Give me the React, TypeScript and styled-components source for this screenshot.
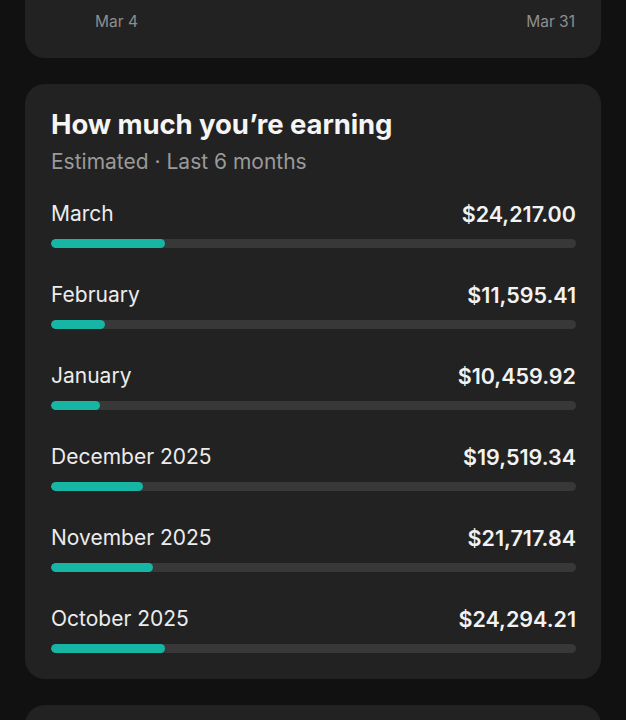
import React from "react";
import styled, { createGlobalStyle } from "styled-components";

const Global = createGlobalStyle`
  html, body { margin: 0; padding: 0; background: #111111; }
  body { font-family: Inter, "Noto Sans", "Liberation Sans", sans-serif; -webkit-font-smoothing: antialiased; }
  #root { overflow: hidden; height: 720px; }
`;

const Page = styled.div`
  display: flex;
  flex-direction: column;
  gap: 26px;
  padding: 0 25px;
  margin-top: -28px;
`;

const Card = styled.section`
  background: #222222;
  border-radius: 20px;
  padding: 24px 25px 26px 26px;
  display: flex;
  flex-direction: column;
`;

const AxisRow = styled.div`
  display: flex;
  justify-content: space-between;
  padding: 16px 1px 0 44px;
  font-size: 15.5px;
  line-height: 20px;
  color: #8e8e8e;
`;

const Title = styled.h2`
  margin: 0;
  font-size: 27.5px;
  line-height: 32px;
  font-weight: 700;
  color: #f5f5f5;
  letter-spacing: -0.1px;
`;

const Subtitle = styled.div`
  margin-top: 8px;
  font-size: 21px;
  line-height: 28px;
  color: #9a9a9a;
`;

const List = styled.div`
  margin-top: 24px;
  display: flex;
  flex-direction: column;
  gap: 33px;
`;

const Row = styled.div`
  display: flex;
  flex-direction: column;
  gap: 11px;
`;

const RowHead = styled.div`
  display: flex;
  justify-content: space-between;
  align-items: center;
  font-size: 21px;
  line-height: 28px;
  color: #ececec;
`;

const Amount = styled.span`
  font-weight: 600;
  font-size: 21.5px;
  color: #f2f2f2;
`;

const Track = styled.div`
  height: 9px;
  border-radius: 5px;
  background: #383838;
  overflow: hidden;
`;

const Fill = styled.div`
  height: 100%;
  border-radius: 5px;
  background: #17b5a3;
`;

const EmptyCard = styled(Card)`
  min-height: 200px;
`;

const months: [string, number][] = [
  ["March", 24217.0],
  ["February", 11595.41],
  ["January", 10459.92],
  ["December 2025", 19519.34],
  ["November 2025", 21717.84],
  ["October 2025", 24294.21],
];

const total = months.reduce((s, [, v]) => s + v, 0);
const fmt = (v: number) =>
  "$" + v.toLocaleString("en-US", { minimumFractionDigits: 2, maximumFractionDigits: 2 });

export default function App() {
  return (
    <>
      <Global />
      <Page>
        <Card>
          <AxisRow>
            <span>Mar 4</span>
            <span>Mar 31</span>
          </AxisRow>
        </Card>
        <Card>
          <Title>How much you’re earning</Title>
          <Subtitle>Estimated · Last 6 months</Subtitle>
          <List>
            {months.map(([m, v]) => (
              <Row key={m}>
                <RowHead>
                  <span>{m}</span>
                  <Amount>{fmt(v)}</Amount>
                </RowHead>
                <Track>
                  <Fill style={{ width: `${(v / total) * 100}%` }} />
                </Track>
              </Row>
            ))}
          </List>
        </Card>
        <EmptyCard />
      </Page>
    </>
  );
}
